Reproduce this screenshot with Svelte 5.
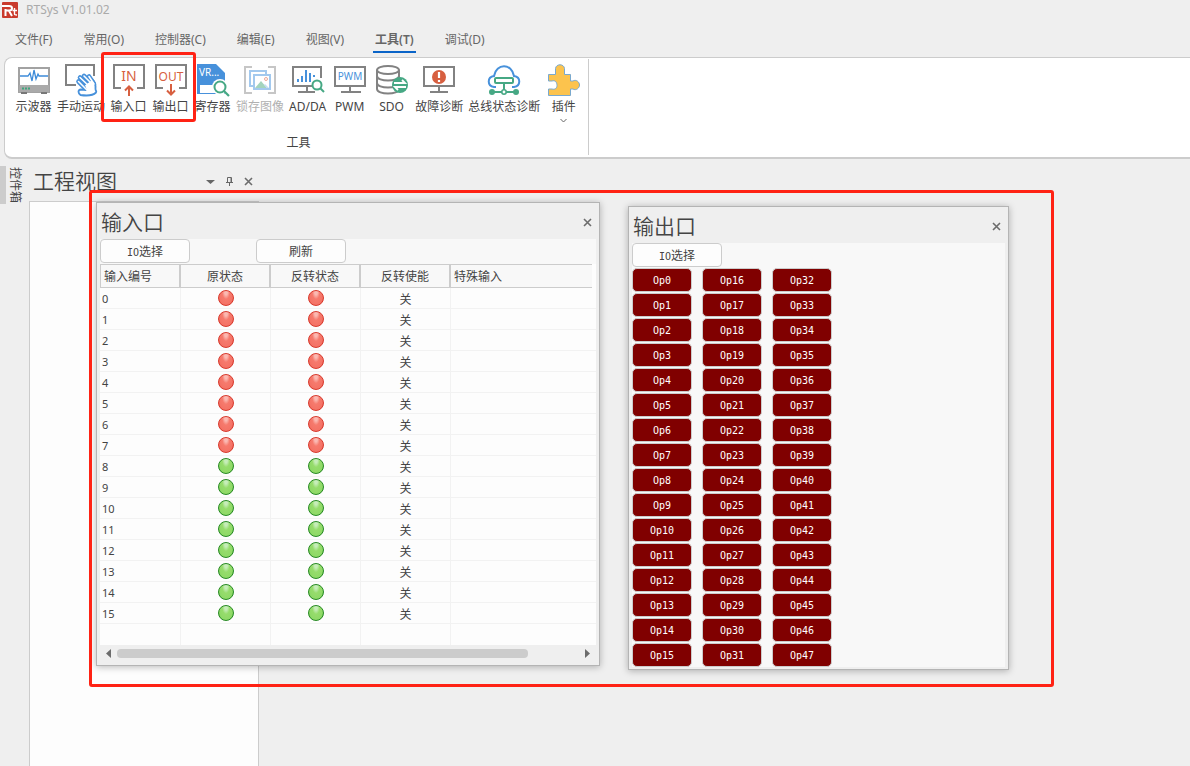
<script>
  const menus = ['文件(F)', '常用(O)', '控制器(C)', '编辑(E)', '视图(V)', '工具(T)', '调试(D)'];
  const activeMenu = '工具(T)';

  const tools = [
    { icon: 'scope', label: '示波器' },
    { icon: 'motion', label: '手动运动' },
    { icon: 'in', label: '输入口' },
    { icon: 'out', label: '输出口' },
    { icon: 'register', label: '寄存器' },
    { icon: 'latch', label: '锁存图像', disabled: true },
    { icon: 'adda', label: 'AD/DA' },
    { icon: 'pwm', label: 'PWM' },
    { icon: 'sdo', label: 'SDO' },
    { icon: 'fault', label: '故障诊断' },
    { icon: 'bus', label: '总线状态诊断' },
    { icon: 'plugin', label: '插件', drop: true }
  ];

  const inputs = Array.from({ length: 16 }, (_, i) => ({ id: i, on: i >= 8 }));
  const outputs = Array.from({ length: 48 }, (_, i) => `Op${i}`);
</script>

{#snippet cross()}
  <svg width="9" height="9" viewBox="0 0 9 9" aria-hidden="true">
    <path d="M1 1L8 8M8 1L1 8" stroke="#6c6c6c" stroke-width="1.6" />
  </svg>
{/snippet}

{#snippet toolIcon(name)}
  <svg class="icon" width="32" height="32" viewBox="0 0 32 32" fill="none" aria-hidden="true">
    {#if name === 'scope'}
      <rect x="1" y="4" width="30" height="24" fill="#fff" stroke="#a2a2a2" stroke-width="2" />
      <rect x="1" y="21" width="30" height="7" fill="#aaa" />
      <rect x="3" y="28" width="6" height="2" fill="#777" />
      <rect x="23" y="28" width="6" height="2" fill="#777" />
      <path d="M4 24.500H13" stroke="#3fa57d" stroke-width="2" stroke-dasharray="2 1" />
      <path d="M2 12H10L12 9L14 17L16 6L18 15L20 10L21 12H30" stroke="#3c8bd9" stroke-width="1.300" />
    {:else if name === 'motion'}
      <path d="M11 21H1V1H29V12" stroke="#828282" stroke-width="2" />
      <g stroke-linecap="round" stroke-linejoin="round">
        <path d="M13.500 17.500L21 25M15 13.500L24 22M19 12L27 20M24 12.500L29 20" stroke="#4791db" stroke-width="4.600" />
        <path d="M19 21L27 15C30 18 31 21 30.500 25C30.500 27 32 27 31 28.500C28 31.500 22 32 15.500 31C13 29 12.500 26 16 25.500L21 26Z" fill="#fff" stroke="#4791db" stroke-width="1.800" />
        <path d="M13.500 17.500L22 26M15 13.500L25 23M19 12L27 20M24 12.500L29 20" stroke="#fff" stroke-width="1.600" />
      </g>
    {:else if name === 'in' || name === 'out'}
      <path d="M8 24H1V1H31V24H24" stroke="#828282" stroke-width="2" />
      <text x="16" y="17" text-anchor="middle" font-size={name === 'in' ? 14 : 12} fill="#d75f40">{name === 'in' ? 'IN' : 'OUT'}</text>
      {#if name === 'in'}
        <path d="M16 32V23M12 26.500L16 22.500L20 26.500" stroke="#d75f40" stroke-width="2" />
      {:else}
        <path d="M16 20V30M12 26.500L16 30.500L20 26.500" stroke="#d75f40" stroke-width="2" />
      {/if}
    {:else if name === 'register'}
      <path d="M0 0H19L28 9V30H0Z" fill="#4791db" />
      <rect x="3" y="21" width="16" height="8" fill="#fff" />
      <text x="2" y="12" font-size="10" fill="#fff">VR...</text>
      <circle cx="23" cy="23" r="8" fill="#fff" />
      <circle cx="23" cy="23" r="5.500" fill="#fff" stroke="#46a884" stroke-width="2" />
      <path d="M27 27L32 32" stroke="#46a884" stroke-width="2.200" />
    {:else if name === 'latch'}
      <path d="M8 3H1V29H8M24 3H31V29H24" stroke="#c6c6c6" stroke-width="2" />
      <path d="M9 22H6V7H22V10" stroke="#a3c9ee" stroke-width="2" />
      <rect x="10" y="11" width="16" height="14" fill="#fff" stroke="#a3c9ee" stroke-width="2" />
      <path d="M11 24L17 17L23 24Z" fill="#a3d4bd" />
      <path d="M21 20L25 24H23L20 21Z" fill="#c3ddf3" />
      <circle cx="22" cy="15" r="1.500" stroke="#eca999" />
    {:else if name === 'adda'}
      <path d="M20 22H1V3H29V14M15 22V27M6 28H23" stroke="#828282" stroke-width="2" />
      <path d="M6 18V15M10 18V12M14 18V6M18 18V9M22 13V11" stroke="#4791db" stroke-width="2" />
      <circle cx="25" cy="21" r="4.500" fill="#fff" stroke="#46a884" stroke-width="2" />
      <path d="M28 24L32 28" stroke="#46a884" stroke-width="2" />
    {:else if name === 'pwm'}
      <path d="M1 3H31V22H1ZM16 22V27M7 28H27" stroke="#828282" stroke-width="2" />
      <text x="16" y="16" text-anchor="middle" font-size="10" fill="#4791db">PWM</text>
    {:else if name === 'sdo'}
      <ellipse cx="12" cy="6" rx="11" ry="4" stroke="#828282" stroke-width="2" />
      <path d="M1 6V25C1 31 23 31 23 25V6M1 12C1 18 23 18 23 12M1 19C1 25 23 25 23 19" stroke="#828282" stroke-width="2" />
      <circle cx="24" cy="21" r="8" fill="#46a884" />
      <path d="M18 19H29L26 16M30 23H19L22 26" stroke="#fff" stroke-width="1.800" />
    {:else if name === 'fault'}
      <path d="M1 3H31V22H1ZM16 22V27M7 28H25" stroke="#828282" stroke-width="2" />
      <circle cx="16" cy="13" r="7" fill="#d75f40" />
      <path d="M16 8V14M16 16V18" stroke="#fff" stroke-width="2.200" />
    {:else if name === 'bus'}
      <path d="M8 23H6C-1 22 -1 13 6 12C8 -1 24 -1 26 12C33 13 33 22 26 23H24" stroke="#4791db" stroke-width="2" />
      <rect x="7" y="14" width="18" height="5" rx="1" fill="#fff" stroke="#46a884" stroke-width="2" />
      <path d="M16 19V27M5 28H28" stroke="#46a884" stroke-width="2" />
      <circle cx="4" cy="28" r="3" fill="#46a884" />
      <circle cx="28" cy="28" r="3" fill="#46a884" />
      <circle cx="16" cy="28" r="2.200" fill="#fff" stroke="#46a884" stroke-width="1.600" />
    {:else}
      <path d="M0.500 10.500H7.500V4.500C8 -.5 16 -.5 16.500 4.500V10.500H22.500V17H25C28 15 31.500 18 31.500 21C31.500 24 28 27 25 25H22.500V31.500H.5V25H4C7 26 9 24 9 21.500C9 18 7 16 4 17H.5Z" fill="#fcc34d" stroke="#79a9cf" />
    {/if}
  </svg>
{/snippet}

{#snippet lamp(on)}
  <span class="lamp" class:on role="img" aria-label={on ? '开' : '关'}></span>
{/snippet}

<div class="app">
  <header class="titlebar">
    <svg width="18" height="18" viewBox="0 0 18 18" aria-hidden="true">
      <rect x="1" y="1" width="16" height="16" rx="1" fill="#c93a2c" />
      <path d="M1 5H8C12 5 12 9.500 8 9.500H4M4.500 15V8M7.500 9L11 15" fill="none" stroke="#fff" stroke-width="2" />
      <path d="M13.500 7V13C13.500 14 14.500 14 16 14M11.500 9.500H16" fill="none" stroke="#fff" stroke-width="1.400" />
    </svg>
    <span>RTSys V1.01.02</span>
  </header>

  <nav class="menu">
    {#each menus as m}
      <button class:active={m === activeMenu}>{m}</button>
    {/each}
  </nav>

  <section class="ribbon">
    <div class="group">
      <div class="tools">
        {#each tools as t}
          <button class="tool" disabled={t.disabled}>
            {@render toolIcon(t.icon)}
            <span>{t.label}</span>
            {#if t.drop}
              <svg width="7" height="5" viewBox="0 0 7 5" aria-hidden="true"><path d="M.5 1L3.500 4L6.500 1" fill="none" stroke="#666" /></svg>
            {/if}
          </button>
        {/each}
      </div>
      <div class="caption">工具</div>
    </div>
  </section>

  <main>
    <aside class="dock"><button>控件箱</button></aside>
    <section class="project">
      <header>
        <h2>工程视图</h2>
        <button aria-label="菜单"><svg width="9" height="9" viewBox="0 0 9 9"><path d="M0 3H9L4.500 7Z" fill="#666" /></svg></button>
        <button aria-label="固定"><svg width="9" height="9" viewBox="0 0 9 9"><path d="M2.500 5V.5H6.500V5M1 5.500H8M4.500 5.500V9M6 1V5" fill="none" stroke="#666" /></svg></button>
        <button aria-label="关闭">{@render cross()}</button>
      </header>
      <div class="tree"></div>
    </section>
  </main>

  <section class="window input-window">
    <header>
      <h2>输入口</h2>
      <button aria-label="关闭">{@render cross()}</button>
    </header>
    <div class="bar">
      <button class="plain"><span class="latin">IO</span>选择</button>
      <button class="plain">刷新</button>
    </div>
    <table>
      <colgroup>
        <col class="c-id" /><col class="c-mid" /><col class="c-mid" /><col class="c-mid" /><col /><col class="c-end" />
      </colgroup>
      <thead>
        <tr>
          <th class="left">输入编号</th>
          <th>原状态</th>
          <th>反转状态</th>
          <th>反转使能</th>
          <th class="left">特殊输入</th>
          <td></td>
        </tr>
      </thead>
      <tbody>
        {#each inputs as r}
          <tr>
            <td class="num">{r.id}</td>
            <td>{@render lamp(r.on)}</td>
            <td>{@render lamp(r.on)}</td>
            <td class="state">关</td>
            <td colspan="2"></td>
          </tr>
        {/each}
        <tr class="last"><td></td><td></td><td></td><td></td><td colspan="2"></td></tr>
      </tbody>
    </table>
    <div class="scroll">
      <svg width="5" height="9" viewBox="0 0 5 9" aria-hidden="true"><path d="M5 0V9L0 4.500Z" fill="#6c6c6c" /></svg>
      <div class="track"><div class="thumb"></div></div>
      <svg width="5" height="9" viewBox="0 0 5 9" aria-hidden="true"><path d="M0 0V9L5 4.500Z" fill="#6c6c6c" /></svg>
    </div>
  </section>

  <section class="window output-window">
    <header>
      <h2>输出口</h2>
      <button aria-label="关闭">{@render cross()}</button>
    </header>
    <div class="bar">
      <button class="plain"><span class="latin">IO</span>选择</button>
    </div>
    <div class="ports">
      {#each outputs as o}
        <button>{o}</button>
      {/each}
    </div>
  </section>

  <div class="mark mark-tools"></div>
  <div class="mark mark-windows"></div>
</div>

<style>
  :global(body) {
    margin: 0;
    background: #efefef;
  }
  .app {
    position: relative;
    display: flex;
    flex-direction: column;
    min-height: 100vh;
    overflow: hidden;
    background: #efefef;
    color: #444;
    font: 12px/16px "Noto Sans", "Noto Sans CJK SC", sans-serif;
  }
  .app, .app * {
    box-sizing: border-box;
  }
  button {
    padding: 0;
    border: 0;
    background: none;
    color: inherit;
    font: inherit;
    white-space: nowrap;
  }
  svg {
    display: block;
    flex: none;
  }
  h2 {
    margin: 0;
    flex: 1;
    font-size: 21px;
    line-height: 28px;
    font-weight: 350;
  }

  .titlebar {
    display: flex;
    align-items: center;
    gap: 7px;
    height: 20px;
    padding-left: 1px;
    color: #aaa;
  }
  .menu {
    display: flex;
    gap: 27px;
    height: 37px;
    padding: 10px 13px 4px;
    color: #666;
  }
  .menu button {
    padding: 0 2px 2px;
    border-bottom: 2px solid transparent;
  }
  .menu .active {
    border-color: #0a64c8;
    font-weight: 600;
  }

  .ribbon {
    display: flex;
    height: 102px;
    margin-left: 4px;
    border: 1px solid #ccc;
    border-width: 1px 0 2px 1px;
    border-radius: 8px 0 0 8px;
    background: #fff;
  }
  .group {
    display: flex;
    flex-direction: column;
    justify-content: space-between;
    margin: 1px 0 2px;
    padding: 5px 6px 4px 10px;
    border-right: 1px solid #ccc;
  }
  .tools {
    display: flex;
    align-items: flex-start;
    gap: 5px;
  }
  .tool {
    display: flex;
    flex-direction: column;
    align-items: center;
    gap: 3px;
    min-width: 37px;
  }
  .tool:disabled {
    color: #b0b0b0;
  }
  .icon {
    overflow: visible;
    font-family: "Noto Sans", sans-serif;
  }
  .caption {
    text-align: center;
  }

  main {
    display: flex;
    flex: 1;
  }
  .dock {
    width: 29px;
    padding-top: 7px;
  }
  .dock button {
    height: 38px;
    width: 24px;
    border-left: 6px solid #ccc;
    writing-mode: vertical-rl;
    text-orientation: sideways;
    line-height: 18px;
  }
  .project {
    display: flex;
    flex-direction: column;
    width: 230px;
  }
  .project header {
    display: flex;
    align-items: center;
    gap: 10px;
    height: 42px;
    padding: 2px 6px 0 4px;
  }
  .tree {
    flex: 1;
    border: 1px solid #ccc;
    border-bottom: 0;
    background: #fdfdfd;
  }

  .window {
    position: absolute;
    padding: 0 3px 3px;
    border: 1px solid #b4b4b4;
    background: #efefef;
    box-shadow: 0 1px 7px rgba(0, 0, 0, 0.28);
  }
  .input-window {
    left: 96px;
    top: 202px;
    width: 504px;
  }
  .output-window {
    left: 628px;
    top: 206px;
    width: 381px;
    padding-bottom: 2px;
  }
  .window header {
    display: flex;
    align-items: center;
    height: 36px;
    padding: 2px 4px 0 1px;
  }
  .bar {
    display: flex;
    gap: 66px;
    height: 25px;
    background: #f8f8f8;
  }
  .plain {
    width: 90px;
    height: 24px;
    padding-top: 2px;
    border: 1px solid #ccc;
    border-radius: 4px;
    background: #fdfdfd;
  }
  .latin {
    font: 10px/16px "DejaVu Sans Mono", monospace;
  }

  table {
    width: 100%;
    table-layout: fixed;
    border-collapse: separate;
    border-spacing: 0;
    background: #fdfdfd;
    text-align: center;
  }
  .c-id { width: 81px; }
  .c-mid { width: 90px; }
  .c-end { width: 4px; }
  th {
    height: 24px;
    padding: 2px 0 0;
    border: 1px solid #ccc;
    border-width: 1px 2px 1px 0;
    background: #f8f8f8;
    font-weight: 400;
  }
  th:first-child {
    border-left-width: 1px;
  }
  th:nth-child(5) {
    border-right: 0;
  }
  th.left {
    padding-left: 3px;
    text-align: left;
  }
  td {
    padding: 0;
  }
  tbody td {
    height: 21px;
    border: 1px solid #f2f2f2;
    border-width: 0 1px 1px 0;
  }
  tbody td:last-child {
    border-right: 0;
  }
  .last td {
    border-bottom: 0;
  }
  .num {
    padding: 2px 0 0 2px;
    text-align: left;
    font-size: 11px;
  }
  .state {
    padding-top: 3px;
  }
  .lamp {
    display: block;
    width: 16px;
    height: 16px;
    margin: 0 auto;
    border: 1px solid #d8392c;
    border-radius: 50%;
    background: radial-gradient(ellipse at 50% 10%, #fbb9b2 0 14%, #f67a6d 38%, #f47265 72%, #df4133 100%);
  }
  .lamp.on {
    border-color: #268a22;
    background: radial-gradient(ellipse at 50% 10%, #c6edb9 0 14%, #96dc6c 38%, #8ed966 72%, #3fa536 100%);
  }

  .scroll {
    display: flex;
    align-items: center;
    gap: 6px;
    height: 17px;
    padding: 0 6px;
  }
  .track {
    flex: 1;
  }
  .thumb {
    width: 89%;
    height: 9px;
    border-radius: 4px;
    background: #ccc;
  }

  .ports {
    display: grid;
    grid-template-columns: repeat(3, 60px);
    grid-template-rows: repeat(16, 24px);
    grid-auto-flow: column;
    gap: 1px 10px;
    background: #f8f8f8;
  }
  .ports button {
    padding-top: 2px;
    border: 1px solid #ccc;
    border-radius: 5px;
    background: #800000;
    color: #fff;
    font: 10px/16px "DejaVu Sans Mono", monospace;
  }

  .mark {
    position: absolute;
    border: 3px solid #ff2214;
    border-radius: 3px;
    pointer-events: none;
  }
  .mark-tools {
    left: 101px;
    top: 52px;
    width: 95px;
    height: 70px;
  }
  .mark-windows {
    left: 89px;
    top: 190px;
    width: 965px;
    height: 497px;
  }
</style>
